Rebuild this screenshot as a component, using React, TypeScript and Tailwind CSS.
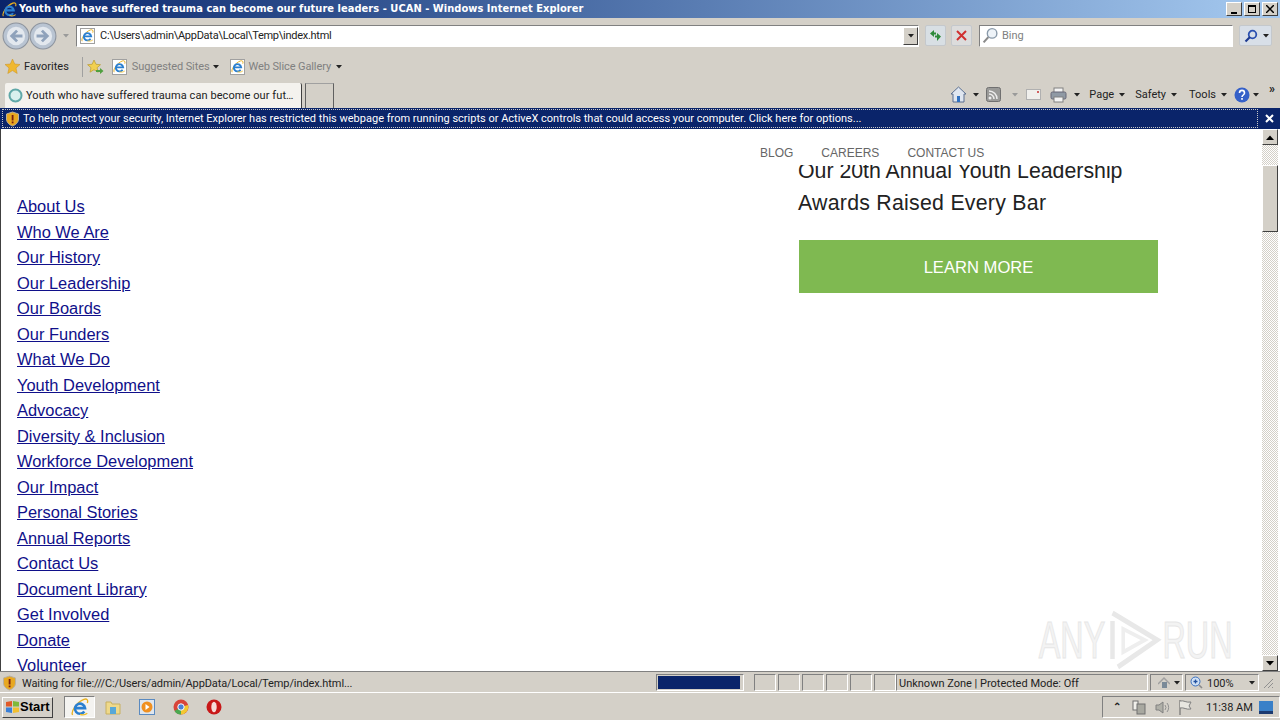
import React from "react";

const links = [
  "About Us",
  "Who We Are",
  "Our History",
  "Our Leadership",
  "Our Boards",
  "Our Funders",
  "What We Do",
  "Youth Development",
  "Advocacy",
  "Diversity & Inclusion",
  "Workforce Development",
  "Our Impact",
  "Personal Stories",
  "Annual Reports",
  "Contact Us",
  "Document Library",
  "Get Involved",
  "Donate",
  "Volunteer",
];

const raised = "border border-t-white border-l-white border-b-[#404040] border-r-[#404040]";
const sunken = "border border-t-[#808080] border-l-[#808080] border-b-white border-r-white";

const IeIcon = ({ size = 16 }: { size?: number }) => (
  <svg width={size} height={size} viewBox="0 0 16 16" className="shrink-0">
    <path d="M1.500 15C-.5 12.500 5 3.500 11.500 1.200c2.500-.9 4 .5 3 3.300" fill="none" stroke="#e8b020" strokeWidth="1.200" />
    <path d="M4 9h8.500A4.500 4.500 0 1 0 11.800 12" fill="none" stroke="#2a7fd0" strokeWidth="2.300" />
    <path d="M8 14.500c2.500.8 5 .3 6.500-1" fill="none" stroke="#f0c030" strokeWidth="1.100" />
  </svg>
);

const PageIe = () => (
  <span className="relative flex h-[16px] w-[15px] shrink-0 items-center justify-center border border-[#a0a0a0] bg-white">
    <IeIcon size={13} />
  </span>
);

const Caret = ({ light }: { light?: boolean }) => (
  <svg width="6" height="4" viewBox="0 0 6 4" className="shrink-0">
    <path d="M0 0h6L3 3.500z" fill={light ? "#9a9a9a" : "#222"} />
  </svg>
);

const NavCircle = ({ forward }: { forward?: boolean }) => (
  <svg width="28" height="28" viewBox="0 0 26 26" className={forward ? "-ml-px" : ""}>
    <circle cx="13" cy="13" r="12" fill="#b9c4d2" stroke="#8d949e" />
    <circle cx="13" cy="13" r="8.500" fill="#e3e8ee" />
    <path
      d={forward ? "M7 13h9M12 8l5 5-5 5" : "M19 13h-9M14 8l-5 5 5 5"}
      fill="none"
      stroke="#8fa2bb"
      strokeWidth="2.600"
    />
  </svg>
);

const Shield = () => (
  <svg width="15" height="16" viewBox="0 0 15 16" className="shrink-0">
    <path d="M7.500 1l6 2v5c0 3.500-3 6-6 7-3-1-6-3.500-6-7V3z" fill="#e8a820" stroke="#b8b0a0" />
    <rect x="6.700" y="4" width="1.800" height="5.500" fill="#7a1f10" />
    <rect x="6.700" y="10.500" width="1.800" height="1.800" fill="#7a1f10" />
  </svg>
);

const WinButton = ({ children }: { children: React.ReactNode }) => (
  <div className={`flex h-[14px] w-[16px] items-center justify-center bg-[#d4d0c8] ${raised}`}>{children}</div>
);

const Cell = ({ className, children }: { className: string; children?: React.ReactNode }) => (
  <div className={`flex h-[17px] shrink-0 items-center ${sunken} ${className}`}>{children}</div>
);

const TitleBar = () => (
  <div className="flex h-[18px] shrink-0 items-center bg-gradient-to-r from-[#0a246a] to-[#a6caf0] pr-[2px]">
    <div className="ml-[2px] mr-[2px]">
      <IeIcon size={15} />
    </div>
    <span className="font-['DejaVu_Sans_Condensed','DejaVu_Sans',sans-serif] text-[11px] font-bold tracking-[0.04px] whitespace-nowrap text-white">
      Youth who have suffered trauma can become our future leaders - UCAN - Windows Internet Explorer
    </span>
    <div className="ml-auto flex">
      <WinButton>
        <span className="mt-[7px] h-[2px] w-[6px] bg-black" />
      </WinButton>
      <div className="ml-[2px]">
        <WinButton>
          <span className="h-[8px] w-[8px] border border-t-2 border-black" />
        </WinButton>
      </div>
      <div className="ml-[2px]">
        <WinButton>
          <svg width="8" height="8" viewBox="0 0 8 8">
            <path d="M0 0l8 8M8 0L0 8" stroke="#000" strokeWidth="1.500" />
          </svg>
        </WinButton>
      </div>
    </div>
  </div>
);

const AddressBar = () => (
  <div className="flex h-[35px] shrink-0 items-center pl-[2px]">
    <NavCircle />
    <NavCircle forward />
    <div className="ml-[6px] mr-[7px]">
      <Caret light />
    </div>
    <div className={`flex h-[22px] w-[843px] items-center bg-white pl-[3px] ${sunken} border-t-[#404040] border-l-[#404040]`}>
      <PageIe />
      <span className="ml-[5px] pt-[2px] tracking-[-0.27px] text-[#222]">C:\Users\admin\AppData\Local\Temp\index.html</span>
      <div className={`ml-auto flex h-[18px] w-[15px] items-center justify-center bg-[#d4d0c8] ${raised}`}>
        <Caret />
      </div>
    </div>
    <div className="ml-[6px] flex h-[21px] w-[21px] items-center justify-center rounded-[2px] border border-[#c4c8cc] bg-[#d8dfe4]">
      <svg width="15" height="13" viewBox="0 0 15 13">
        <path d="M6 1L2 4.500 6 8V5.500h2V3.500H6zM9 12l4-4.500L9 4v2.500H7v2h2z" fill="#2d8a3a" />
      </svg>
    </div>
    <div className="ml-[5px] flex h-[21px] w-[21px] items-center justify-center rounded-[2px] border border-[#c4c8cc] bg-[#dcdcdc]">
      <svg width="11" height="11" viewBox="0 0 11 11">
        <path d="M1 1l9 9M10 1l-9 9" stroke="#d03030" strokeWidth="2" />
      </svg>
    </div>
    <div className={`ml-[7px] flex h-[22px] w-[254px] items-center bg-white pl-[2px] ${sunken} border-t-[#404040] border-l-[#404040]`}>
      <svg width="17" height="17" viewBox="0 0 15 16" className="shrink-0">
        <circle cx="9" cy="6" r="4.500" fill="#eef3f8" stroke="#8a9aaa" strokeWidth="1.300" />
        <path d="M5.500 9.500L1 14.500" stroke="#8a8a8a" strokeWidth="2" />
      </svg>
      <span className="ml-[3px] pt-[2px] text-[#808080]">Bing</span>
    </div>
    <div className="ml-[6px] flex h-[21px] w-[33px] items-center rounded-[2px] border border-[#c4c8cc] bg-[#d8dfe8]">
      <div className="flex w-[21px] justify-center">
        <svg width="14" height="14" viewBox="0 0 14 14">
          <circle cx="8.500" cy="5.500" r="3.800" fill="none" stroke="#2a50b0" strokeWidth="1.800" />
          <path d="M6 8l-4.500 4.500" stroke="#1c3a90" strokeWidth="2.200" />
        </svg>
      </div>
      <div className="flex flex-1 justify-center">
        <Caret />
      </div>
    </div>
  </div>
);

const FavoritesBar = () => (
  <div className="flex h-[27px] shrink-0 items-center pl-[5px]">
    <svg width="15" height="15" viewBox="0 0 15 15" className="shrink-0">
      <path d="M7.500 0l2.200 5 5.300.5-4 3.500 1.200 5.500-4.700-2.900-4.700 2.900L4 9 0 5.500 5.300 5z" fill="#f0b830" stroke="#c89020" strokeWidth=".5" />
    </svg>
    <span className="ml-[4px] pt-[2px] text-[#222]">Favorites</span>
    <div className="ml-[13px] h-[20px] w-px bg-[#a0a0a0]" />
    <svg width="17" height="16" viewBox="0 0 17 16" className="ml-[4px] shrink-0">
      <path d="M7 1l2 4.300 4.500.4-3.400 3 1 4.500L7 10.700l-4 2.500 1-4.500-3.400-3 4.500-.4z" fill="#f2d050" stroke="#b89a30" strokeWidth=".7" />
      <path d="M9 11h4V9l3.500 3-3.500 3v-2H9z" fill="#50a040" />
    </svg>
    <div className="ml-[8px]">
      <PageIe />
    </div>
    <span className="ml-[5px] pt-[2px] tracking-[-0.1px] text-[#808080]">Suggested Sites</span>
    <div className="ml-[4px]">
      <Caret />
    </div>
    <div className="ml-[11px]">
      <PageIe />
    </div>
    <span className="ml-[3px] pt-[2px] tracking-[-0.1px] text-[#808080]">Web Slice Gallery</span>
    <div className="ml-[5px]">
      <Caret />
    </div>
  </div>
);

const TabRow = () => (
  <div className="flex h-[28px] shrink-0 items-end pl-[5px]">
    <div className="flex h-[25px] w-[297px] items-center rounded-t-[2px] border-r border-[#404040] bg-[#f4f2ee] pl-[3px]">
      <svg width="15" height="15" viewBox="0 0 15 15" className="shrink-0">
        <circle cx="7.500" cy="7.500" r="6" fill="#d8f0ee" stroke="#60a8a8" strokeWidth="2" />
      </svg>
      <span className="ml-[3px] pt-[2px] tracking-[0.08px] whitespace-nowrap text-[#222]">Youth who have suffered trauma can become our fut…</span>
    </div>
    <div className="ml-[3px] h-[25px] w-[29px] border-x border-t border-x-[#606060] border-t-[#a0a0a0]" />
    <div className="ml-auto flex h-[28px] items-center pr-[5px] pt-px">
      <svg width="17" height="17" viewBox="0 0 17 17" className="shrink-0">
        <path d="M1 8l7.500-7L16 8h-2v8H3V8z" fill="#dfe6f0" stroke="#5a6f90" />
        <rect x="7" y="10" width="3" height="6" fill="#3070c0" />
      </svg>
      <div className="ml-[6px]">
        <Caret />
      </div>
      <svg width="15" height="15" viewBox="0 0 15 15" className="ml-[7px] shrink-0">
        <rect x=".5" y=".5" width="14" height="14" rx="2" fill="#9a9a98" stroke="#707070" />
        <circle cx="4" cy="11" r="1.500" fill="#eee" />
        <path d="M3 7a5 5 0 015 5M3 4a8 8 0 018 8" fill="none" stroke="#eee" strokeWidth="1.500" />
      </svg>
      <div className="ml-[11px]">
        <Caret light />
      </div>
      <svg width="15" height="11" viewBox="0 0 15 11" className="ml-[8px] shrink-0">
        <rect x=".5" y=".5" width="14" height="10" fill="#f0efec" stroke="#b0b0b0" />
        <path d="M11 2h2v2h-2z" fill="#d06060" />
      </svg>
      <svg width="17" height="16" viewBox="0 0 17 16" className="ml-[9px] shrink-0">
        <rect x="4" y="1" width="9" height="5" fill="#f4f4f4" stroke="#808080" />
        <rect x="1" y="5" width="15" height="7" rx="1.500" fill="#8f99a4" stroke="#667" />
        <rect x="4" y="10" width="9" height="5" fill="#f4f4f4" stroke="#808080" />
      </svg>
      <div className="ml-[7px]">
        <Caret />
      </div>
      <span className="ml-[9px] pt-[2px] text-[#222]">Page</span>
      <div className="ml-[5px]">
        <Caret />
      </div>
      <span className="ml-[10px] pt-[2px] text-[#222]">Safety</span>
      <div className="ml-[5px]">
        <Caret />
      </div>
      <span className="ml-[12px] pt-[2px] text-[#222]">Tools</span>
      <div className="ml-[5px]">
        <Caret />
      </div>
      <svg width="16" height="16" viewBox="0 0 16 16" className="ml-[7px] shrink-0">
        <circle cx="8" cy="8" r="7.500" fill="#3560c8" />
        <path d="M5.500 6c0-3.500 5-3.500 5 0 0 2-2.500 2-2.500 4" fill="none" stroke="#fff" strokeWidth="1.600" />
        <rect x="7.200" y="11" width="1.600" height="1.800" fill="#fff" />
      </svg>
      <div className="ml-[3px]">
        <Caret />
      </div>
      <span className="mb-[11px] ml-[10px] text-[12px] leading-none font-bold text-[#222]">»</span>
    </div>
  </div>
);

const InfoBar = () => (
  <div className="flex h-[21px] shrink-0 items-center bg-[#0a246a] pl-[2px] text-white">
    <div className="flex h-[19px] w-[1256px] items-center border border-dotted border-[#c8c8c8] pl-[2px]">
      <Shield />
      <span className="ml-[3px] pt-[2px] whitespace-nowrap">
        To help protect your security, Internet Explorer has restricted this webpage from running scripts or ActiveX controls that could access your computer. Click here for options...
      </span>
    </div>
    <svg width="9" height="9" viewBox="0 0 9 9" className="ml-[7px]">
      <path d="M1 1l7 7M8 1L1 8" stroke="#fff" strokeWidth="2" />
    </svg>
  </div>
);

const ScrollButton = ({ down }: { down?: boolean }) => (
  <div className={`flex h-[16px] w-[16px] shrink-0 items-center justify-center bg-[#d4d0c8] ${raised}`}>
    <svg width="8" height="5" viewBox="0 0 8 5">
      <path d={down ? "M0 0h8L4 4.500z" : "M0 5h8L4 .500z"} fill="#000" />
    </svg>
  </div>
);

const Scrollbar = () => (
  <div className="flex w-[16px] shrink-0 flex-col bg-[repeating-conic-gradient(#d4d0c8_0_25%,#ffffff_0_50%)] bg-[length:2px_2px]">
    <ScrollButton />
    <div className={`mt-[20px] h-[67px] bg-[#d4d0c8] ${raised}`} />
    <div className="mt-auto">
      <ScrollButton down />
    </div>
  </div>
);

const Page = () => (
  <div className="relative flex-1 overflow-hidden bg-white font-['Liberation_Sans',sans-serif]">
    <div className="flex h-full">
      <ul className="w-[797px] shrink-0 pl-[16px] pt-[65px] text-[16.45px] leading-[25.5px] text-[#10108a]">
        {links.map((l) => (
          <li key={l}>
            <a className="underline">{l}</a>
          </li>
        ))}
      </ul>
      <div className="w-[360px] pt-[26px] pl-px">
        <h2 className="-ml-px text-[21.3px] leading-[32px] font-normal whitespace-nowrap text-[#222]">
          Our 20th Annual Youth Leadership
          <br />
          <span className="tracking-[0.26px]">Awards Raised Every Bar</span>
        </h2>
        <div className="mt-[21px] flex h-[53px] items-center justify-center bg-[#7fb951] pt-[3px] text-[16.6px] text-white">LEARN MORE</div>
      </div>
    </div>
    <div className="absolute inset-x-0 top-0 flex h-[36px] items-start bg-white pl-[759px] pt-[17px] text-[12px] leading-[14px] text-[#666]">
      <span>BLOG</span>
      <span className="ml-[28px]">CAREERS</span>
      <span className="ml-[28px]">CONTACT US</span>
    </div>
    <div className="absolute right-[29px] bottom-0 flex origin-right items-center text-[52px] leading-none text-[#f3f3f3] [-webkit-text-stroke:1px_#e6e6e6] [transform:scaleX(0.622)]">
      <span>ANY</span>
      <svg width="92" height="62" viewBox="0 0 64 62" preserveAspectRatio="none">
        <path d="M8 12v38M8 4l50 27L14 58" fill="none" stroke="#e8e8e8" strokeWidth="5" />
        <path d="M20 20l24 11-24 12z" fill="none" stroke="#eeeeee" strokeWidth="4" />
      </svg>
      <span>RUN</span>
    </div>
  </div>
);

const StatusBar = () => (
  <div className="flex h-[22px] shrink-0 items-center border-y border-t-[#808080] border-b-white pl-[2px] pt-px">
    <Cell className="w-[651px] border-none">
      <Shield />
      <span className="ml-[5px] pt-[3px] tracking-[-0.1px] text-[#222]">Waiting for file:///C:/Users/admin/AppData/Local/Temp/index.html...</span>
    </Cell>
    <Cell className="ml-[3px] w-[88px] pl-px">
      <div className="h-[13px] w-[82px] bg-[#0a246a]" />
    </Cell>
    <Cell className="ml-[10px] w-[22px]" />
    <Cell className="ml-[2px] w-[22px]" />
    <Cell className="ml-[2px] w-[22px]" />
    <Cell className="ml-[2px] w-[22px]" />
    <Cell className="ml-[2px] w-[22px]" />
    <Cell className="ml-[2px] w-[22px]" />
    <Cell className="w-[252px] pl-[2px]">
      <span className="pt-[3px] whitespace-nowrap text-[#222]">Unknown Zone | Protected Mode: Off</span>
    </Cell>
    <Cell className="ml-[2px] w-[33px] gap-[4px] pl-[7px]">
      <svg width="12" height="13" viewBox="0 0 12 13">
        <path d="M0 8l6-6 6 6" fill="none" stroke="#a0a0a0" strokeWidth="1.500" />
        <rect x="4" y="6" width="5" height="6" fill="#7a8a98" />
      </svg>
      <Caret />
    </Cell>
    <Cell className="ml-[2px] w-[74px] pl-[4px]">
      <svg width="13" height="13" viewBox="0 0 13 13" className="shrink-0">
        <circle cx="5.500" cy="5.500" r="4.500" fill="#cfe0f4" stroke="#3a70c0" />
        <path d="M3.500 5.500h4M5.500 3.500v4" stroke="#2050a0" strokeWidth="1.300" />
        <path d="M9 9l3 3" stroke="#8a8a8a" strokeWidth="1.600" />
      </svg>
      <span className="ml-[4px] pt-[3px] text-[#222]">100%</span>
      <div className="ml-[15px]">
        <Caret />
      </div>
    </Cell>
    <svg width="13" height="13" viewBox="0 0 13 13" className="ml-[2px]">
      <path d="M12 3l-9 9M12 7l-5 5M12 11l-1 1" stroke="#909090" />
    </svg>
  </div>
);

const Taskbar = () => (
  <div className="flex flex-1 items-center pl-[2px] pt-px">
    <div className={`flex h-[21px] w-[51px] items-center bg-[#d4d0c8] pl-[2px] ${raised}`}>
      <svg width="15" height="14" viewBox="0 0 15 14" className="shrink-0">
        <path d="M1 2l6-1v5.500H1z" fill="#e05a28" />
        <path d="M8 1l6 1v4.500H8z" fill="#7fb93a" />
        <path d="M1 7.500h6V13l-6-1z" fill="#3a80d8" />
        <path d="M8 7.500h6V12l-6 1z" fill="#f2c030" />
      </svg>
      <span className="font-['Liberation_Sans',sans-serif] text-[13px] font-bold text-black">Start</span>
    </div>
    <div className={`ml-[11px] flex h-[22px] w-[31px] items-center justify-center bg-[#f4f3f0] ${sunken} border-t-[#404040] border-l-[#404040]`}>
      <IeIcon size={18} />
    </div>
    <svg width="16" height="16" viewBox="0 0 16 16" className="ml-[10px] shrink-0">
      <path d="M1 3h5l1 2h8v10H1z" fill="#efd98a" stroke="#c8b060" />
      <rect x="5" y="8" width="6" height="7" fill="#58a8d8" />
    </svg>
    <svg width="16" height="16" viewBox="0 0 16 16" className="ml-[18px] shrink-0">
      <rect x=".5" y=".5" width="15" height="15" fill="#dfe6ee" stroke="#5a8ac0" />
      <circle cx="8" cy="8" r="5.500" fill="#f09020" />
      <path d="M6.500 5l4 3-4 3z" fill="#fff" />
    </svg>
    <svg width="16" height="16" viewBox="0 0 16 16" className="ml-[18px] shrink-0">
      <circle cx="8" cy="8" r="7.500" fill="#d8443a" />
      <path d="M8 8L1.500 12A7.500 7.500 0 008 15.500L12 8z" fill="#4aa850" />
      <path d="M8 8l7 -2A7.500 7.500 0 0 1 8 15.500z" fill="#f2c830" />
      <circle cx="8" cy="8" r="3.200" fill="#4a80d8" stroke="#fff" />
    </svg>
    <svg width="16" height="16" viewBox="0 0 16 16" className="ml-[17px] shrink-0">
      <ellipse cx="8" cy="8" rx="7.500" ry="7.500" fill="#c81818" />
      <ellipse cx="8" cy="8" rx="2.700" ry="5.200" fill="#f6dcd8" />
    </svg>
    <div className={`ml-auto flex h-[22px] w-[178px] items-center ${sunken} pl-[10px]`}>
      <span className="text-[10px] leading-none font-bold text-[#222]">⌃</span>
      <svg width="14" height="15" viewBox="0 0 14 15" className="ml-[11px] shrink-0">
        <rect x="1" y="1" width="5" height="9" fill="#f0efea" stroke="#707070" />
        <rect x="5" y="4" width="8" height="10" fill="#a8a8a0" stroke="#707070" />
      </svg>
      <svg width="15" height="15" viewBox="0 0 15 15" className="ml-[9px] shrink-0">
        <path d="M1 5h3l4-3v11l-4-3H1z" fill="#b0b0a8" stroke="#808080" />
        <path d="M10 5a4 4 0 010 5M12 3a7 7 0 010 9" fill="none" stroke="#909090" />
      </svg>
      <svg width="15" height="16" viewBox="0 0 15 16" className="ml-[8px] shrink-0">
        <path d="M2 1v15" stroke="#606060" />
        <path d="M2 2c4-1 6 2 11 1l-2 4 2 3c-5 1-7-2-11-1" fill="#e8e6e0" stroke="#808080" />
      </svg>
      <span className="ml-[13px] pt-[2px] text-[#222]">11:38 AM</span>
      <svg width="14" height="15" viewBox="0 0 14 15" className="ml-[6px] shrink-0">
        <rect x="0" y="1" width="14" height="12" fill="#3a80c8" />
        <rect x="0" y="11" width="14" height="3" fill="#1c3a70" />
      </svg>
    </div>
  </div>
);

export default function App() {
  return (
    <div className="flex h-[720px] w-[1280px] flex-col overflow-hidden bg-[#d4d0c8] font-['Roboto',sans-serif] text-[11px]">
      <TitleBar />
      <AddressBar />
      <FavoritesBar />
      <TabRow />
      <InfoBar />
      <div className="flex h-[542px] shrink-0 border-l border-l-[#404040] bg-white pr-[2px]">
        <Page />
        <Scrollbar />
      </div>
      <StatusBar />
      <Taskbar />
    </div>
  );
}
